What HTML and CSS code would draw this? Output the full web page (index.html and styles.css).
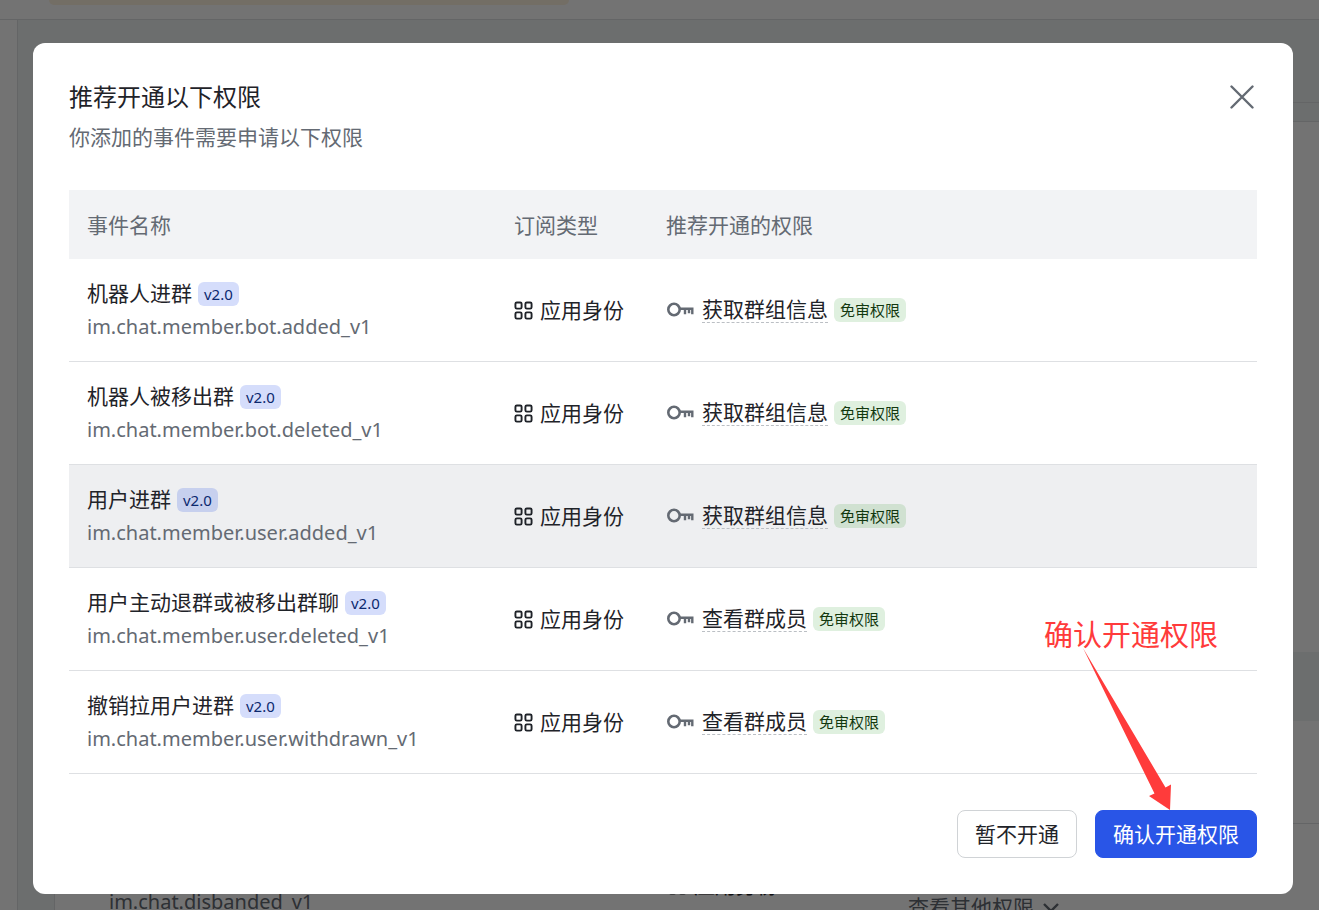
FILE: index.html
```
<!DOCTYPE html>
<html lang="zh-CN">
<head>
<meta charset="utf-8">
<meta name="viewport" content="width=device-width, initial-scale=1">
<title>推荐开通以下权限</title>
<link rel="stylesheet" href="styles.css">
</head>
<body>
<svg class="sprite" aria-hidden="true">
  <symbol id="icon-apps" viewBox="0 0 20 20">
    <g fill="none" stroke="currentColor" stroke-width="2">
      <rect x="1.500" y="1.500" width="6.500" height="6.500" rx="1.500"/>
      <rect x="12" y="1.500" width="6.500" height="6.500" rx="1.500"/>
      <rect x="1.500" y="12" width="6.500" height="6.500" rx="1.500"/>
      <rect x="12" y="12" width="6.500" height="6.500" rx="1.500"/>
    </g>
  </symbol>
  <symbol id="icon-key" viewBox="0 0 28 16">
    <g fill="none" stroke="currentColor" stroke-width="2.6">
      <circle cx="8" cy="7.500" r="5.700"/>
      <path d="M14 6.800H27.500M19 6.800v5.400M23 6.800v4.400M26.300 6.800v5.400" stroke-width="2.400"/>
    </g>
  </symbol>
</svg>

<div class="page" aria-hidden="true">
  <header class="topbar"><div class="notice"></div></header>
  <div class="body">
    <div class="sidebar"></div>
    <main class="content">
      <div class="content-head"></div>
      <section class="panel">
        <div class="panel-space"></div>
        <div class="list-head"></div>
        <div class="list-row"></div>
        <div class="list-row list-row-last">
          <div class="list-event"><div>解散群</div><div class="muted">im.chat.disbanded_v1</div></div>
          <div class="identity list-type"><svg class="icon-apps"><use href="#icon-apps"/></svg>应用身份</div>
          <div class="list-scope"><div>获取群组信息</div><div class="more">查看其他权限
            <svg class="chevron" viewBox="0 0 18 12"><path d="M2 2l7 7 7-7" fill="none" stroke="currentColor" stroke-width="2.4"/></svg></div></div>
        </div>
      </section>
    </main>
  </div>
</div>

<div class="mask">
  <div class="modal" role="dialog" aria-modal="true" aria-labelledby="modal-title">
    <div class="modal-head">
      <div>
        <h1 id="modal-title">推荐开通以下权限</h1>
        <p>你添加的事件需要申请以下权限</p>
      </div>
      <button class="close" type="button" aria-label="关闭">
        <svg viewBox="0 0 24 24"><path d="M1.5 1.5l21 21M22.5 1.5l-21 21" fill="none" stroke="currentColor" stroke-width="2.4" stroke-linecap="round"/></svg>
      </button>
    </div>

    <table class="events">
      <colgroup><col class="col-event"><col class="col-type"><col></colgroup>
      <thead>
        <tr><th scope="col">事件名称</th><th scope="col">订阅类型</th><th scope="col">推荐开通的权限</th></tr>
      </thead>
      <tbody>
        <tr>
          <td><div class="name">机器人进群<span class="tag version">v2.0</span></div><div class="muted">im.chat.member.bot.added_v1</div></td>
          <td><div class="identity"><svg class="icon-apps"><use href="#icon-apps"/></svg>应用身份</div></td>
          <td><div class="scope"><svg class="icon-key"><use href="#icon-key"/></svg><a href="#">获取群组信息</a><span class="tag free">免审权限</span></div></td>
        </tr>
        <tr>
          <td><div class="name">机器人被移出群<span class="tag version">v2.0</span></div><div class="muted">im.chat.member.bot.deleted_v1</div></td>
          <td><div class="identity"><svg class="icon-apps"><use href="#icon-apps"/></svg>应用身份</div></td>
          <td><div class="scope"><svg class="icon-key"><use href="#icon-key"/></svg><a href="#">获取群组信息</a><span class="tag free">免审权限</span></div></td>
        </tr>
        <tr class="active">
          <td><div class="name">用户进群<span class="tag version">v2.0</span></div><div class="muted">im.chat.member.user.added_v1</div></td>
          <td><div class="identity"><svg class="icon-apps"><use href="#icon-apps"/></svg>应用身份</div></td>
          <td><div class="scope"><svg class="icon-key"><use href="#icon-key"/></svg><a href="#">获取群组信息</a><span class="tag free">免审权限</span></div></td>
        </tr>
        <tr>
          <td><div class="name">用户主动退群或被移出群聊<span class="tag version">v2.0</span></div><div class="muted">im.chat.member.user.deleted_v1</div></td>
          <td><div class="identity"><svg class="icon-apps"><use href="#icon-apps"/></svg>应用身份</div></td>
          <td><div class="scope"><svg class="icon-key"><use href="#icon-key"/></svg><a href="#">查看群成员</a><span class="tag free">免审权限</span></div></td>
        </tr>
        <tr>
          <td><div class="name">撤销拉用户进群<span class="tag version">v2.0</span></div><div class="muted">im.chat.member.user.withdrawn_v1</div></td>
          <td><div class="identity"><svg class="icon-apps"><use href="#icon-apps"/></svg>应用身份</div></td>
          <td><div class="scope"><svg class="icon-key"><use href="#icon-key"/></svg><a href="#">查看群成员</a><span class="tag free">免审权限</span></div></td>
        </tr>
      </tbody>
    </table>

    <div class="actions">
      <button class="btn" type="button">暂不开通</button>
      <button class="btn primary" type="button">确认开通权限</button>
    </div>

    <div class="callout">
      <span>确认开通权限</span>
      <svg viewBox="0 0 174 162"><path d="M39 0L121.500 139.500L127 136.500L126 162L105 148L110.500 145.500Z" fill="#ff3b3b"/></svg>
    </div>
  </div>
</div>
</body>
</html>
```
FILE: styles.css
```
* { box-sizing: border-box; }

body {
  margin: 0;
  overflow: hidden;
  font-family: "Noto Sans", "Noto Sans CJK SC", sans-serif;
  font-size: 21px;
  line-height: 33px;
  color: #1f2329;
}

h1, p { margin: 0; font-weight: 400; }
button { font: inherit; cursor: pointer; }
.sprite { position: absolute; width: 0; height: 0; }
.muted { color: #646a73; font-size: 20px; }

/* Page behind the dialog */
.page { height: 100vh; overflow: hidden; display: flex; flex-direction: column; background: #fff; }
.topbar { flex: none; height: 20px; padding-left: 49px; border-bottom: 1px solid #dee0e3; }
.notice { width: 520px; height: 5px; border-radius: 0 0 8px 8px; background: #fff3e0; }
.body { flex: 1; min-height: 0; display: flex; }
.sidebar { flex: none; width: 18px; border-right: 1px solid #dee0e3; }
.content { flex: 1; min-width: 0; background: #f0f4f3; }
.content-head { height: 83px; margin-left: 36px; border-bottom: 1px solid #dee0e3; }
.panel { margin: 18px 0 0 36px; border: 1px solid #dee0e3; border-right: 0; background: #fff; }
.panel-space { height: 530px; }
.list-head { height: 69px; background: #f0f4f3; }
.list-row { height: 103px; border-bottom: 1px solid #dee0e3; }
.list-row-last { display: flex; height: 124px; padding: 28px 0 0 54px; }
.list-event { width: 559px; }
.list-type { width: 240px; height: 66px; }
.more { display: flex; align-items: center; gap: 8px; padding-top: 6px; color: #646a73; }
.chevron { width: 18px; height: 12px; }

/* Dialog */
.mask { position: fixed; inset: 0; padding: 43px 26px 16px 33px; background: rgba(0, 0, 0, .55); }
.modal { position: relative; padding: 36px; border-radius: 12px; background: #fff; }
.modal-head { display: flex; justify-content: space-between; align-items: flex-start; margin-bottom: 36px; }
.modal-head h1 { margin-bottom: 6px; font-size: 24px; line-height: 36px; }
.modal-head p { color: #646a73; }
.close { display: flex; margin: 6px 3px 0 0; padding: 0; border: 0; background: none; color: #646a73; }
.close svg { width: 24px; height: 24px; }

.events { width: 100%; table-layout: fixed; border-collapse: separate; border-spacing: 0; }
.col-event { width: 427px; }
.col-type { width: 152px; }
.events th { padding: 19px 18px 17px; text-align: left; font-weight: 400; color: #646a73; background: #f2f3f5; white-space: nowrap; }
.events td { padding: 18px; border-bottom: 1px solid #dee0e3; white-space: nowrap; }
.events .active td { background: #eeeff1; }
.name, .identity, .scope { display: flex; align-items: center; }
.name, .scope { gap: 6px; }
.identity { gap: 7px; }
.icon-apps { flex: none; width: 19px; height: 19px; }
.icon-key { flex: none; width: 28px; height: 16px; margin-right: 2px; color: #646a73; }
.scope a { line-height: 25px; color: inherit; text-decoration: none; border-bottom: 1px dashed #bbbfc4; }
.tag { padding: 0 6px; border-radius: 6px; font-size: 15px; line-height: 24px; }
.version { background: #d5ddfb; color: #0c296e; }
.free { background: #dff0df; color: #12380f; }
.active .version { background: #c7d0ee; }
.active .free { background: #d0e1d1; }

.actions { display: flex; justify-content: flex-end; gap: 18px; margin-top: 36px; }
.btn { height: 48px; padding: 0 17px; border: 1px solid #d0d3d6; border-radius: 8px; background: #fff; color: #1f2329; }
.primary { border-color: #2955e7; background: #2955e7; color: #fff; }

/* Pointer note above the confirm button */
.callout { position: absolute; right: 75px; bottom: 84px; display: flex; flex-direction: column; width: 174px; color: #ff3b3b; font-size: 29px; line-height: 27px; white-space: nowrap; pointer-events: none; }
.callout svg { width: 174px; height: 162px; }
```
